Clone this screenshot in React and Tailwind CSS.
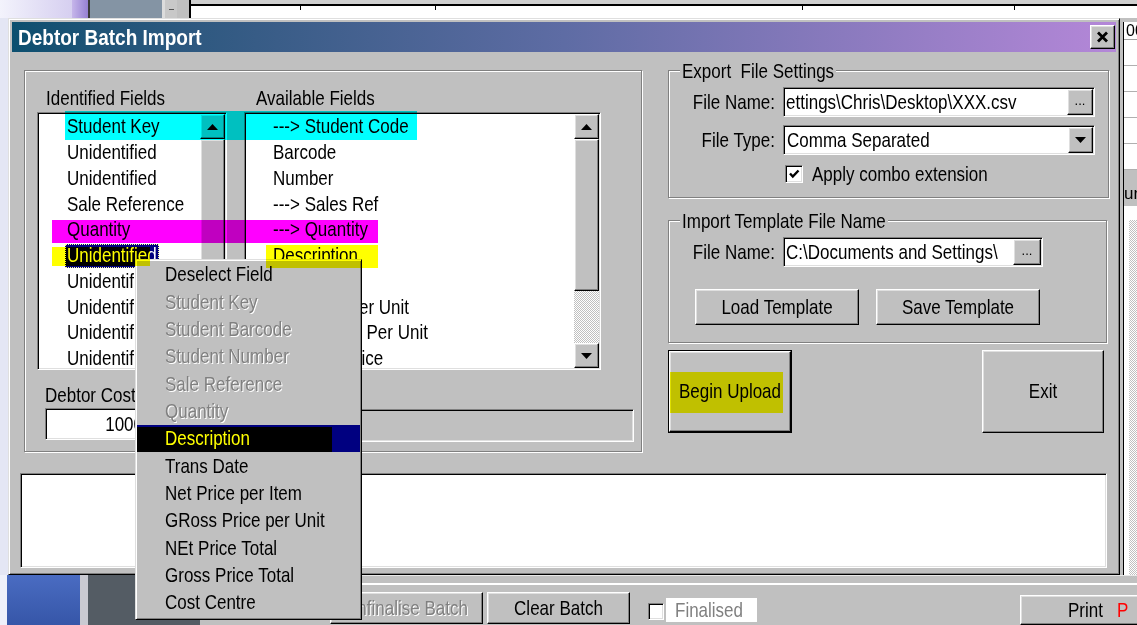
import React from 'react';

// win98 bevels
const raised = 'border border-t-white border-l-white border-r-black border-b-black shadow-[inset_-1px_-1px_0_#808080,inset_1px_1px_0_#dfdfdf]';
const sunken = 'border border-t-[#808080] border-l-[#808080] border-r-white border-b-white shadow-[inset_1px_1px_0_#000,inset_-1px_-1px_0_#dfdfdf]';
const etched = 'border border-[#808080] shadow-[inset_1px_1px_0_#fff,1px_1px_0_#fff]';
const dither = 'bg-[repeating-conic-gradient(#c0c0c0_0%_25%,#ffffff_0%_50%)] bg-size-[2px_2px]';
const disabled = 'text-[#808080] [text-shadow:1px_1px_0_#fff]';

const identified = [
  'Student Key',
  'Unidentified',
  'Unidentified',
  'Sale Reference',
  'Quantity',
  'Unidentified',
  'Unidentified',
  'Unidentified',
  'Unidentified',
  'Unidentified',
];

const available = [
  '---> Student Code',
  'Barcode',
  'Number',
  '---> Sales Ref',
  '---> Quantity',
  'Description',
  'Trans Date',
  'Net Price Per Unit',
  'Gross Price Per Unit',
  'Net Total Price',
];

const menuItems = [
  { label: 'Deselect Field' },
  { label: 'Student Key', off: true },
  { label: 'Student Barcode', off: true },
  { label: 'Student Number', off: true },
  { label: 'Sale Reference', off: true },
  { label: 'Quantity', off: true },
  { label: 'Description', active: true },
  { label: 'Trans Date' },
  { label: 'Net Price per Item' },
  { label: 'GRoss Price per Unit' },
  { label: 'NEt Price Total' },
  { label: 'Gross Price Total' },
  { label: 'Cost Centre' },
];

// the system font here is drawn tall and narrow
const T = ({ children, className = '' }) => (
  <span className={`inline-block whitespace-pre scale-y-[1.2] ${className}`}>{children}</span>
);

const Arrow = ({ up }) => (
  <svg width="11" height="6" viewBox="0 0 11 6">
    <polygon points={up ? '5.5,0 11,6 0,6' : '0,0 11,0 5.5,6'} fill="#000" />
  </svg>
);

const ScrollBar = ({ thumbClass }) => (
  <div className="w-[25px] shrink-0 flex flex-col">
    <div className={`h-[25px] shrink-0 flex items-center justify-center bg-[#c0c0c0] ${raised}`}>
      <Arrow up />
    </div>
    <div className={`shrink-0 bg-[#c0c0c0] ${raised} ${thumbClass}`} />
    <div className={`flex-1 ${dither}`} />
    <div className={`h-[25px] shrink-0 flex items-center justify-center bg-[#c0c0c0] ${raised}`}>
      <Arrow />
    </div>
  </div>
);

const ListBox = ({ items, selected, padClass, thumbClass }) => (
  <div className={`mt-[2px] h-[258px] bg-white p-[1px] flex ${sunken}`}>
    <div className="flex-1 overflow-hidden flex flex-col">
      {items.map((text, i) => (
        <div key={i} className={`h-[25.75px] shrink-0 flex items-center whitespace-nowrap ${padClass}`}>
          {i === selected ? (
            <span className="-ml-[2px] h-[24px] px-[1px] flex items-center bg-[#000080] text-white border border-dotted border-[#ffff9a]">
              <T>{text}</T>
            </span>
          ) : (
            <T>{text}</T>
          )}
        </div>
      ))}
    </div>
    <ScrollBar thumbClass={thumbClass} />
  </div>
);

const EllipsisButton = ({ widthClass }) => (
  <div className={`h-[26px] mr-[1px] shrink-0 flex items-end justify-center pb-[7px] bg-[#c0c0c0] text-[13px] leading-none ${raised} ${widthClass}`}>
    ...
  </div>
);

const Marker = ({ className }) => (
  <div className={`pointer-events-none absolute z-20 mix-blend-multiply ${className}`} />
);

export default function App() {
  return (
    <div className="relative w-[1137px] h-[625px] overflow-hidden flex flex-col bg-[#c0c0c0] text-black text-[17px] leading-none font-['Liberation_Sans',Arial,sans-serif]">
      {/* application behind the dialog: top edge */}
      <div className="h-[18px] shrink-0 flex">
        <div className="w-[72px] shrink-0 bg-linear-to-r from-[#f3f3fc] to-[#d6cff0]" />
        <div className="w-[16px] shrink-0 bg-linear-to-r from-[#c6b6ea] to-[#9680d2]" />
        <div className="w-[2px] shrink-0 bg-[#3a3a3a]" />
        <div className="w-[72px] shrink-0 bg-[#8494a4]" />
        <div className="w-[3px] shrink-0 bg-[#dcdcdc]" />
        <div className="w-[12px] shrink-0 bg-[#c8c8c8] flex items-center justify-center">
          <div className="w-[5px] h-[1px] bg-[#555]" />
        </div>
        <div className="w-[12px] shrink-0 bg-[#c0c0c0]" />
        <div className="w-[2px] shrink-0 bg-black" />
        <div className="flex-1 bg-white flex flex-col">
          <div className="h-[4px] bg-[#d0d0d0]" />
          <div className="h-[2px] bg-black" />
          <div className="flex-1 flex">
            <div className="w-[109px]" />
            <div className="w-[1px] h-[4px] bg-black" />
            <div className="w-[134px]" />
            <div className="w-[1px] h-[4px] bg-black" />
            <div className="w-[366px]" />
            <div className="w-[1px] h-[4px] bg-black" />
            <div className="w-[211px]" />
            <div className="w-[1px] h-[4px] bg-black" />
          </div>
        </div>
      </div>

      <div className="h-[557px] shrink-0 flex">
        <div className="w-[8px] shrink-0 bg-[#e4e6f4]" />

        {/* Debtor Batch Import window */}
        <div className="w-[1112px] shrink-0 h-full flex flex-col bg-[#c0c0c0] p-[3px] border border-t-[#dfdfdf] border-l-[#dfdfdf] border-r-black border-b-black shadow-[inset_1px_1px_0_#fff,inset_-1px_-1px_0_#808080]">
          <div className="h-[30px] shrink-0 flex items-center justify-between pl-[6px] pr-[1px] bg-linear-to-r from-[#0b4f6f] via-[#5e6ca4] to-[#b487d8]">
            <span className="inline-block scale-y-[1.2] text-white font-bold text-[19px]">Debtor Batch Import</span>
            <div className={`w-[25px] h-[24px] flex items-center justify-center bg-[#c0c0c0] ${raised}`}>
              <svg width="13" height="12" viewBox="0 0 13 12">
                <path d="M2 1.5 L11 10.5 M11 1.5 L2 10.5" stroke="#000" strokeWidth="2.8" />
              </svg>
            </div>
          </div>

          <div className="flex-1 flex flex-col">
            <div className="mt-[7px] ml-[12px] flex items-start">
              {/* field mapping */}
              <div className={`mt-[11px] w-[618px] shrink-0 h-[382px] pt-[15px] ${etched}`}>
                <div className="flex pl-[12px]">
                  <div className="w-[190px] shrink-0 flex flex-col">
                    <div className="h-[24px] flex items-center pl-[9px]"><T>Identified Fields</T></div>
                    <ListBox items={identified} selected={5} padClass="pl-[28px]" thumbClass="h-[190px]" />
                  </div>
                  <div className="ml-[17px] w-[357px] shrink-0 flex flex-col">
                    <div className="h-[24px] flex items-center pl-[12px]"><T>Available Fields</T></div>
                    <ListBox items={available} selected={-1} padClass="pl-[27px]" thumbClass="h-[152px]" />
                  </div>
                </div>
                <div className="mt-[13px] pl-[20px]">
                  <div className="h-[24px] flex items-center"><T>Debtor Cost Centre</T></div>
                  <div className="mt-[1px] flex items-start">
                    <div className={`w-[105px] h-[32px] bg-white flex items-center justify-end pr-[6px] ${sunken}`}><T>1000</T></div>
                    <div className={`ml-[5px] mt-[1px] w-[479px] h-[33px] bg-[#c0c0c0] ${sunken}`} />
                  </div>
                </div>
              </div>

              {/* file settings and actions */}
              <div className="ml-[26px] w-[441px] shrink-0 flex flex-col">
                <div className={`mt-[11px] w-[441px] h-[128px] ${etched}`}>
                  <div className="-mt-[12px] ml-[11px] w-fit px-[2px] h-[24px] flex items-center bg-[#c0c0c0]"><T>Export  File Settings</T></div>
                  <div className="mt-[4px] grid grid-cols-[106px_312px] gap-x-[8px] gap-y-[8px] items-center">
                    <div className="text-right"><T>File Name:</T></div>
                    <div className={`h-[30px] bg-white flex items-stretch ${sunken}`}>
                      <div className="flex-1 flex items-center pl-[2px] overflow-hidden whitespace-nowrap"><T>{'ettings\\Chris\\Desktop\\XXX.csv'}</T></div>
                      <div className="flex items-center"><EllipsisButton widthClass="w-[26px]" /></div>
                    </div>
                    <div className="text-right"><T>File Type:</T></div>
                    <div className={`h-[30px] bg-white flex items-stretch ${sunken}`}>
                      <div className="flex-1 flex items-center pl-[3px] overflow-hidden whitespace-nowrap"><T>Comma Separated</T></div>
                      <div className="flex items-center">
                        <div className={`w-[25px] h-[26px] mr-[1px] flex items-center justify-center bg-[#c0c0c0] ${raised}`}>
                          <Arrow />
                        </div>
                      </div>
                    </div>
                  </div>
                  <div className="mt-[10px] ml-[116px] flex items-center">
                    <div className={`w-[18px] h-[18px] bg-white flex items-center justify-center ${sunken}`}>
                      <svg width="12" height="12" viewBox="0 0 12 12">
                        <path d="M2 5.5 L4.8 8.5 L10.5 2.5" stroke="#000" strokeWidth="2.4" fill="none" />
                      </svg>
                    </div>
                    <T className="ml-[9px]">Apply combo extension</T>
                  </div>
                </div>

                <div className={`mt-[22px] w-[439px] h-[123px] ${etched}`}>
                  <div className="-mt-[12px] ml-[11px] w-fit px-[2px] h-[24px] flex items-center bg-[#c0c0c0]"><T>Import Template File Name</T></div>
                  <div className="mt-[4px] flex items-center">
                    <div className="w-[106px] text-right"><T>File Name:</T></div>
                    <div className={`ml-[8px] w-[260px] h-[30px] bg-white flex items-stretch ${sunken}`}>
                      <div className="flex-1 flex items-center pl-[2px] overflow-hidden whitespace-nowrap"><T>{'C:\\Documents and Settings\\'}</T></div>
                      <div className="flex items-center"><EllipsisButton widthClass="w-[28px]" /></div>
                    </div>
                  </div>
                  <div className="mt-[22px] flex">
                    <div className={`ml-[26px] w-[164px] h-[36px] flex items-center justify-center bg-[#c0c0c0] ${raised}`}><T>Load Template</T></div>
                    <div className={`ml-[17px] w-[164px] h-[36px] flex items-center justify-center bg-[#c0c0c0] ${raised}`}><T>Save Template</T></div>
                  </div>
                </div>

                <div className="mt-[7px] flex">
                  <div className="w-[124px] h-[83px] border border-black">
                    <div className={`h-full flex items-center justify-center bg-[#c0c0c0] ${raised}`}><T>Begin Upload</T></div>
                  </div>
                  <div className={`ml-[190px] w-[122px] h-[83px] flex items-center justify-center bg-[#c0c0c0] ${raised}`}><T>Exit</T></div>
                </div>
              </div>
            </div>

            {/* status log */}
            <div className={`mt-[21px] ml-[8px] w-[1087px] h-[95px] bg-white ${sunken}`} />
          </div>
        </div>

        {/* grid of the application behind, right edge */}
        <div className="flex-1 flex flex-col overflow-hidden">
          <div className="h-[4px] shrink-0" />
          <div className="flex-1 flex">
            <div className="w-[3px] shrink-0" />
            <div className="flex-1 flex flex-col bg-white border-l border-black">
              <div className="h-[18px] shrink-0 pl-[2px] text-[16px] leading-[18px] border-b border-[#a0a0a0]">00</div>
              <div className="h-[26px] shrink-0 border-b border-[#b0b0b0]" />
              <div className="h-[26px] shrink-0 border-b border-[#b0b0b0]" />
              <div className="h-[26px] shrink-0 border-b border-[#b0b0b0]" />
              <div className="h-[26px] shrink-0 border-b border-[#b0b0b0]" />
              <div className="h-[26px] shrink-0 border-b border-[#b0b0b0]" />
              <div className="h-[36px] shrink-0 bg-[#c0c0c0] flex items-end pb-[4px] text-[17px]">ur</div>
              <div className="h-[14px] shrink-0 bg-white" />
              <div className={`flex-1 ml-[5px] ${dither}`} />
            </div>
          </div>
        </div>
      </div>

      {/* desktop and toolbar of the application below */}
      <div className="h-[50px] shrink-0 flex">
        <div className="w-[7px] shrink-0 bg-[#eef0fa]" />
        <div className="w-[73px] shrink-0 bg-linear-to-b from-[#4a6cc2] to-[#3656a8]" />
        <div className="w-[8px] shrink-0 bg-[#c9cad2]" />
        <div className="w-[112px] shrink-0 bg-[#545c64]" />
        <div className="flex-1 min-w-0 flex flex-col bg-[#c0c0c0]">
          <div className="h-[2px] bg-[#e8e8e8]" />
          <div className="h-[11px]" />
          <div className="h-[2px] border-t border-[#404040] border-b border-white" />
          <div className="pt-[7px] flex items-start whitespace-nowrap">
            <div className={`ml-[130px] w-[153px] h-[32px] shrink-0 flex items-center justify-center ${disabled} ${raised}`}><T>Unfinalise Batch</T></div>
            <div className={`ml-[4px] w-[143px] h-[32px] shrink-0 flex items-center justify-center ${raised}`}><T>Clear Batch</T></div>
            <div className={`ml-[18px] mt-[11px] w-[16px] h-[17px] shrink-0 bg-white ${sunken}`} />
            <div className={`ml-[2px] mt-[6px] w-[91px] h-[24px] shrink-0 bg-white flex items-center pl-[9px] ${disabled}`}><T>Finalised</T></div>
            <div className={`ml-[263px] mt-[3px] w-[130px] h-[30px] shrink-0 flex items-center pl-[47px] ${raised}`}>
              <T>Print</T>
              <T className="ml-[14px] text-[#ff0000]">P</T>
            </div>
          </div>
        </div>
      </div>

      {/* right-click menu on the identified field */}
      <div className="absolute z-10 left-[135px] top-[259px] w-[227px] h-[361px] p-[1px] bg-[#c0c0c0] border border-t-[#dfdfdf] border-l-[#dfdfdf] border-r-black border-b-black shadow-[inset_1px_1px_0_#fff,inset_-1px_-1px_0_#808080]">
        {menuItems.map((item) => (
          <div
            key={item.label}
            className={`h-[27.35px] flex items-center pl-[28px] whitespace-nowrap ${item.active ? 'bg-[#000080] text-white' : ''} ${item.off ? disabled : ''}`}
          >
            <T>{item.label}</T>
          </div>
        ))}
      </div>

      {/* highlighter marks */}
      <Marker className="left-[65px] top-[111px] w-[352px] h-[29px] bg-[#00ffff]" />
      <Marker className="left-[52px] top-[220px] w-[326px] h-[23px] bg-[#ff00ff]" />
      <Marker className="left-[52px] top-[247px] w-[98px] h-[19px] bg-[#ffff00]" />
      <Marker className="left-[266px] top-[245px] w-[112px] h-[23px] bg-[#ffff00]" />
      <Marker className="left-[137px] top-[427px] w-[195px] h-[25px] bg-[#ffff00]" />
      <Marker className="left-[670px] top-[372px] w-[113px] h-[41px] bg-[#ffff00]" />
    </div>
  );
}
